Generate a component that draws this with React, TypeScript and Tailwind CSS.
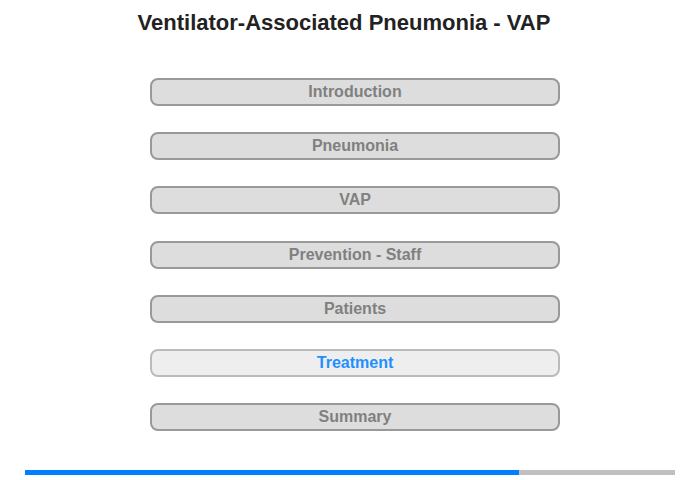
import React from "react";

const items = [
  "Introduction",
  "Pneumonia",
  "VAP",
  "Prevention - Staff",
  "Patients",
  "Treatment",
  "Summary",
];

export default function App() {
  return (
    <div
      className="w-[700px] h-[480px] bg-white relative overflow-hidden"
      style={{ fontFamily: '"Liberation Sans", Arial, sans-serif' }}
    >
      <div className="pt-[10px] h-[78px] pr-[12px] text-center">
        <h1 className="text-[22px] leading-[26px] font-bold text-[#222222]">
          Ventilator-Associated Pneumonia - VAP
        </h1>
      </div>
      <div className="flex flex-col gap-[26.2px] ml-[150px] w-[410px]">
        {items.map((it) => {
          const active = it === "Treatment";
          return (
            <div
              key={it}
              className={
                active
                  ? "h-[28px] rounded-[8px] border-2 border-[#bbbbbb] bg-[#eeeeee] flex items-center justify-center text-[16px] font-bold text-[#1e90ff]"
                  : "h-[28px] rounded-[8px] border-2 border-[#999999] bg-[#dddddd] flex items-center justify-center text-[16px] font-bold text-[#808080]"
              }
            >
              {it}
            </div>
          );
        })}
      </div>
      <div className="absolute left-[25px] top-[470px] w-[650px] h-[5px] bg-[#c0c0c0] flex">
        <div className="w-[494px] h-full bg-[#0080ff]" />
      </div>
    </div>
  );
}
